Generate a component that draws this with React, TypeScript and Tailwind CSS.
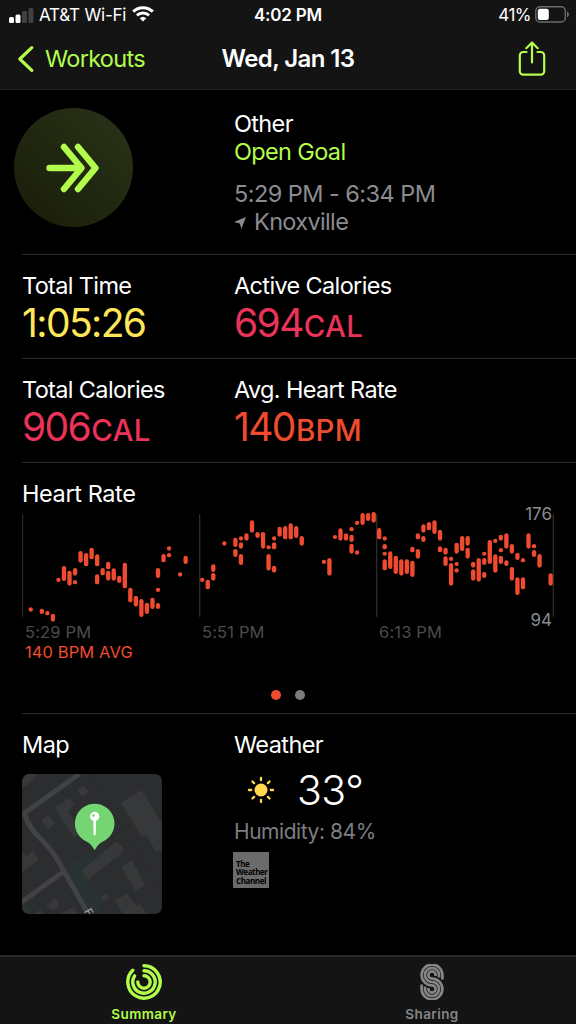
import { ReactNode } from "react";

// [slot, top, bottom] - a range as tall as the bar is wide is drawn as a dot
type Sample = [number, number, number];

const samples: Sample[] = [
    [1, 322, 335], [3, 326, 342], [4, 333, 346], [5, 341, 365], [6, 233, 246], [7, 198, 243],
    [8, 212, 257], [9, 204, 227], [9, 240, 253], [10, 153, 188], [11, 159, 199], [12, 143, 178],
    [13, 163, 199], [13, 223, 253], [14, 204, 226], [15, 185, 208], [15, 212, 242], [16, 205, 242],
    [17, 227, 249], [18, 188, 265], [19, 263, 307], [20, 287, 320], [21, 297, 351], [22, 308, 342],
    [23, 293, 327], [24, 204, 234], [24, 263, 276], [24, 309, 327], [25, 162, 187], [26, 139, 152],
    [26, 159, 172], [28, 217, 230], [29, 167, 192], [32, 233, 246], [33, 239, 268], [34, 193, 216],
    [34, 219, 242], [36, 124, 137], [38, 113, 141], [38, 147, 171], [39, 109, 122], [39, 127, 146],
    [39, 162, 195], [40, 100, 122], [41, 61, 98], [42, 96, 114], [43, 96, 146], [44, 136, 148],
    [44, 162, 212], [45, 109, 122], [45, 127, 148], [45, 197, 218], [46, 80, 110], [47, 78, 118],
    [48, 70, 118], [49, 78, 114], [50, 108, 137], [54, 179, 192], [55, 174, 227], [56, 105, 117],
    [57, 85, 122], [58, 100, 122], [59, 81, 94], [59, 104, 126], [59, 131, 161], [60, 62, 75],
    [60, 151, 164], [61, 39, 75], [62, 39, 63], [63, 36, 68], [64, 84, 118], [65, 109, 122],
    [65, 132, 148], [65, 155, 167], [65, 178, 211], [66, 154, 207], [67, 167, 222], [68, 178, 227],
    [69, 178, 222], [70, 140, 157], [70, 182, 231], [71, 100, 118], [71, 147, 176], [72, 73, 98],
    [72, 108, 126], [73, 66, 91], [74, 61, 102], [75, 89, 122], [75, 139, 157], [76, 143, 164],
    [76, 169, 198], [77, 170, 183], [77, 189, 257], [78, 128, 161], [78, 186, 198], [78, 205, 218],
    [79, 108, 153], [80, 108, 137], [80, 143, 176], [81, 185, 203], [81, 208, 242], [82, 174, 245],
    [83, 155, 167], [83, 174, 195], [83, 216, 234], [84, 120, 192], [85, 116, 129], [85, 163, 218],
    [86, 104, 122], [86, 144, 157], [86, 167, 192], [87, 100, 146], [87, 181, 198], [88, 132, 161],
    [88, 201, 242], [89, 158, 180], [89, 232, 285], [90, 174, 187], [90, 232, 268], [91, 100, 146],
    [92, 132, 145], [92, 150, 171], [93, 162, 203], [95, 220, 257],
];

const gridLines = [1.5, 533, 1064, 1594];

function StatusBar() {
    return (
        <div className="grid h-[30px] grid-cols-[1fr_auto_1fr] items-center px-[6px] pt-px text-[17px] text-white">
            <div className="ml-[3px] flex items-center">
                <svg className="h-4 w-[25px]" viewBox="0 0 25 16">
                    <rect x="0" y="9" width="5" height="6" rx="1.5" fill="#fff" />
                    <rect x="6.5" y="6.5" width="5" height="8.5" rx="1.5" fill="#fff" />
                    <rect x="13" y="3" width="5" height="12" rx="1.5" fill="#414141" />
                    <rect x="19.4" y="0" width="5" height="15" rx="1.5" fill="#414141" />
                </svg>
                <span className="ml-[5px] whitespace-nowrap tracking-[-0.2px]">AT&amp;T Wi-Fi</span>
                <svg className="ml-[6px] mt-[-3px] h-[16px] w-[22px]" viewBox="0 0 22 16" fill="none" stroke="#fff" strokeWidth="3">
                    <path d="M1.2 5.6a14.2 14.2 0 0 1 19.6 0" />
                    <path d="M4.9 9.4a8.9 8.9 0 0 1 12.2 0" />
                    <path d="M11 15.6 7.7 12.2a4.8 4.8 0 0 1 6.6 0Z" fill="#fff" stroke="none" />
                </svg>
            </div>
            <span className="font-semibold tracking-[-0.2px]">4:02 PM</span>
            <div className="flex items-center justify-end">
                <span className="tracking-[-0.5px]">41%</span>
                <svg className="ml-[4px] mt-[-3px] h-[17px] w-[35px]" viewBox="0 0 35 17">
                    <rect x="0.8" y="0.8" width="29.5" height="15.2" rx="4.2" fill="none" stroke="#6b6b6b" strokeWidth="1.4" />
                    <rect x="2.8" y="2.8" width="11" height="11.2" rx="2.2" fill="#fff" />
                    <path d="M32 5.5c2.6.8 2.6 5 0 5.8Z" fill="#6b6b6b" />
                </svg>
            </div>
        </div>
    );
}

function NavBar() {
    return (
        <div className="grid h-[57px] grid-cols-[1fr_auto_1fr] items-center px-[17px]">
            <div className="flex items-center text-[#b2fc4b]">
                <svg className="h-[28px] w-[18px]" viewBox="0 0 18 28" fill="none" stroke="currentColor" strokeWidth="3.2" strokeLinecap="round" strokeLinejoin="round">
                    <path d="M14.8 2.6 2.8 14l12 11.4" />
                </svg>
                <span className="ml-[10px] text-[23.5px] tracking-[-0.7px]">Workouts</span>
            </div>
            <h1 className="text-[24px] font-semibold tracking-[-0.6px] text-white">Wed, Jan 13</h1>
            <svg className="mr-[13px] mt-[-1px] h-[35px] w-[28px] justify-self-end" viewBox="0 0 28 35" fill="none" stroke="#b2fc4b" strokeWidth="2.2" strokeLinecap="round" strokeLinejoin="round">
                <path d="M8.5 11H5.2a3.4 3.4 0 0 0-3.4 3.4v15.8a3.4 3.4 0 0 0 3.4 3.4h17.6a3.4 3.4 0 0 0 3.4-3.4V14.4a3.4 3.4 0 0 0-3.4-3.4h-3.3" />
                <path d="M14 21.5V2M8.3 7.2 14 1.5l5.7 5.7" />
            </svg>
        </div>
    );
}

function Metric({ label, value, unit, color }: { label: string; value: string; unit?: string; color: string }) {
    return (
        <div className="pt-[17px]">
            <div className="text-[23.5px] leading-[28px] tracking-[-0.65px] text-white">{label}</div>
            <div className={`text-[39px] leading-[45px] tracking-[-1.6px] ${color}`}>
                {value}
                {unit && <span className="ml-px text-[29.5px] font-medium tracking-[0.3px]">{unit}</span>}
            </div>
        </div>
    );
}

function Row({ className, children }: { className: string; children: ReactNode }) {
    return <div className={`grid grid-cols-[212px_1fr] border-b border-[#2b2b2b] ${className}`}>{children}</div>;
}

function HeartRateChart() {
    return (
        <section className="h-[251px] border-b border-[#2b2b2b] pt-[17px]">
            <h2 className="text-[23.5px] leading-[28px] tracking-[-0.4px] text-white">Heart Rate</h2>
            <div className="relative mt-[2px] h-[112px] w-[532px]">
                <svg className="h-[112px] w-[532px]" viewBox="0 30 1596 336">
                    {gridLines.map((x) => (
                        <line key={x} x1={x} x2={x} y1="42" y2="350" stroke="#2b2b2b" strokeWidth="4" />
                    ))}
                    {samples.map(([slot, top, bottom]) => (
                        <rect
                            key={`${slot}-${top}`}
                            x={(slot + 0.5) * 16.59 - 5}
                            y={top}
                            width="13"
                            height={bottom - top}
                            rx="6.5"
                            fill="#f04b31"
                        />
                    ))}
                </svg>
                <span className="absolute right-[2px] top-[-6px] text-[17px] leading-[20px] text-[#8b8b8f]">176</span>
                <span className="absolute right-[2px] top-[100px] text-[17px] leading-[20px] text-[#8b8b8f]">94</span>
            </div>
            <div className="grid grid-cols-[177px_177px_1fr] pl-[3px] text-[16.5px] leading-[20px] tracking-[0.15px] text-[#4b4b4d]">
                <span>5:29 PM</span>
                <span>5:51 PM</span>
                <span>6:13 PM</span>
            </div>
            <div className="pl-[3px] text-[16.5px] leading-[20px] tracking-[0.1px] text-[#f04b31]">140 BPM AVG</div>
            <div className="mt-[28px] flex justify-center gap-[14px] pr-[22px]">
                <span className="size-[10px] rounded-full bg-[#f04b31]" />
                <span className="size-[10px] rounded-full bg-[#7b7b7b]" />
            </div>
        </section>
    );
}

function MapTile() {
    return (
        <svg className="mt-[15px] size-[140px] rounded-[7px]" viewBox="37 42 418 418">
            <rect x="37" y="42" width="418" height="418" fill="#2c2d2f" />
            <path d="M165 325 240 278l20 60-30 30 50 50-20 42h-25Z" fill="#293332" />
            <path d="M37 425l40 35H37Z" fill="#293332" />
            <g fill="#373839">
                <path d="M332 128 394 90l61 100v80l-18 4-30-50-12 6Z" />
                <path d="m135 142 45-28 14 22-20 14 36 65-18 18Z" />
                <path d="m201 92 20-14 15 18-20 14Z" />
                <path d="m96 180 14-15 12 6 13 17-17 18-10-6Z" />
                <path d="m214 330 106-88 24 28-109 88Z" />
                <path d="m333 318 32-18 41 75-31 15Z" />
                <path d="m315 420 35-20 28 35 12-5 18 30h-70Z" />
                <path d="m37 278 16 8 15-15 21 26-52 37Z" />
                <path d="m111 435 14-10 5-12 15 7 3 15-19 15Z" />
                <path d="m270 410 15-11 12 11-17 13Z" />
                <path d="M37 58 52 42h35L50 78 37 80Z" />
                <path d="m70 460 22-12 10 12ZM150 460l38-20 20 20Z" />
            </g>
            <path d="M238 42 455 395" stroke="#27282a" strokeWidth="2" />
            <g fill="none" stroke="#414244" strokeWidth="15">
                <path d="M208 42 42 160" />
                <path d="M42 155c20 70 75 90 105 150l85 150" />
                <path d="M37 424 160 334" />
            </g>
            <text x="221" y="452" fontSize="33" fill="#a8a8ab" transform="rotate(60 221 452)">F</text>
            <path d="M254 131a59 59 0 0 1 26 112c-14 7-18 14-26 27-8-13-12-20-26-27a59 59 0 0 1 26-112Z" fill="#74d572" />
            <path d="M250 182h8l-1 43h-6Z" fill="#fff" />
            <circle cx="254" cy="169" r="14" fill="#fff" />
            <circle cx="250" cy="166" r="4" fill="#74d572" />
        </svg>
    );
}

function SunIcon() {
    return (
        <svg className="size-[28px]" viewBox="-14 -14 28 28" stroke="#ffd850" strokeWidth="2.3" strokeLinecap="round">
            <circle r="6.5" fill="#ffd850" stroke="none" />
            {[0, 45, 90, 135, 180, 225, 270, 315].map((angle) => (
                <line key={angle} x1="0" x2="0" y1="-12.1" y2="-9.8" transform={`rotate(${angle})`} />
            ))}
        </svg>
    );
}

function RingsIcon() {
    return (
        <svg className="size-[36px]" viewBox="-18 -18 36 36" fill="none" stroke="#b2fc4b" strokeWidth="3.4" strokeLinecap="round">
            <path d="M0-16.2A16.2 16.2 0 1 1-11.2-11.7" />
            <path d="M0-11.2A11.2 11.2 0 1 1-9.4-6.1" />
            <path d="M0-6.2A6.2 6.2 0 1 1-6.2 0" />
        </svg>
    );
}

function SharingIcon() {
    return (
        <svg className="size-[36px]" viewBox="-18 -18 36 36" fill="none" stroke="#858585" strokeWidth="2.7">
            <path d="M10.4-2.5V-7A10.4 10.4 0 1 0 0 3.4 3.6 3.6 0 1 1-3.6 7V6" />
            <path d="M7-4.5V-7A7 7 0 1 0 0 0 7 7 0 1 1-7 7V4.5" />
            <path d="M3.6-6V-7A3.6 3.6 0 1 0 0-3.4 10.4 10.4 0 1 1-10.4 7V2.5" />
        </svg>
    );
}

export default function App() {
    return (
        <div className="flex h-[1024px] w-[576px] flex-col overflow-hidden bg-black font-[Inter,sans-serif]">
            <header className="h-[90px] border-b border-[#222222] bg-[#141414]">
                <StatusBar />
                <NavBar />
            </header>

            <main className="flex-1 pl-[22px]">
                <Row className="h-[165px]">
                    <div className="ml-[-8px] mt-[18px] flex size-[119px] items-center justify-center rounded-full bg-linear-to-tr from-[#191c08] to-[#293419] pr-[2px]">
                        <svg className="h-[50px] w-[54px]" viewBox="0 0 54 50" fill="none" stroke="#b2fc4b" strokeWidth="6.4" strokeLinecap="round" strokeLinejoin="round">
                            <path d="M3.5 25h31M18 4 35.5 25 18 46" />
                            <path d="M32 4 49.5 25 32 46" />
                        </svg>
                    </div>
                    <div className="pt-[20px] text-[23.5px] leading-[28px] tracking-[-0.65px]">
                        <div className="text-white">Other</div>
                        <div className="text-[#b2fc4b]">Open Goal</div>
                        <div className="mt-[14px] tracking-[-0.55px] text-[#8b8b8f]">5:29 PM - 6:34 PM</div>
                        <div className="flex items-center text-[#8b8b8f]">
                            <svg className="mr-[8px] mt-[2px] size-[12px]" viewBox="0 0 12 12" fill="currentColor">
                                <path d="M12 0 7.4 12 5.8 6.4 0 5Z" />
                            </svg>
                            Knoxville
                        </div>
                    </div>
                </Row>
                <Row className="h-[104px]">
                    <Metric label="Total Time" value="1:05:26" color="text-[#ffe757]" />
                    <Metric label="Active Calories" value="694" unit="CAL" color="text-[#ea3358]" />
                </Row>
                <Row className="h-[104px]">
                    <Metric label="Total Calories" value="906" unit="CAL" color="text-[#ea3358]" />
                    <Metric label="Avg. Heart Rate" value="140" unit="BPM" color="text-[#f04b31]" />
                </Row>
                <HeartRateChart />
                <div className="grid grid-cols-[212px_1fr] pt-[17px]">
                    <div>
                        <h2 className="text-[23.5px] leading-[28px] tracking-[-0.6px] text-white">Map</h2>
                        <MapTile />
                    </div>
                    <div>
                        <h2 className="text-[23.5px] leading-[28px] tracking-[-0.6px] text-white">Weather</h2>
                        <div className="mt-[7px] flex h-[48px] items-center pl-[13px]">
                            <SunIcon />
                            <span className="ml-[22px] text-[41px] font-[350] leading-[48px] tracking-[-0.5px] text-white">33°</span>
                        </div>
                        <div className="mt-[4px] text-[21px] leading-[28px] tracking-[-0.45px] text-[#7d7d80]">Humidity: 84%</div>
                        <div className="ml-[-1px] mt-[6px] flex size-[36px] flex-col justify-end bg-[#6b6b6b] pb-[3px] pl-[3px] font-['Open_Sans',sans-serif] text-[8px] font-bold leading-[8.5px] tracking-[-0.4px] text-black">
                            <span>The</span>
                            <span>Weather</span>
                            <span>Channel</span>
                        </div>
                    </div>
                </div>
            </main>

            <nav className="grid h-[69px] grid-cols-2 border-t-2 border-[#2a2a2a] bg-[#141414] text-[13.5px] font-semibold leading-[18px] tracking-[0.4px]">
                <div className="flex flex-col items-center pt-[7px] text-[#b2fc4b]">
                    <RingsIcon />
                    <span className="mt-[5px]">Summary</span>
                </div>
                <div className="flex flex-col items-center pt-[7px] text-[#858585]">
                    <SharingIcon />
                    <span className="mt-[5px]">Sharing</span>
                </div>
            </nav>
        </div>
    );
}
